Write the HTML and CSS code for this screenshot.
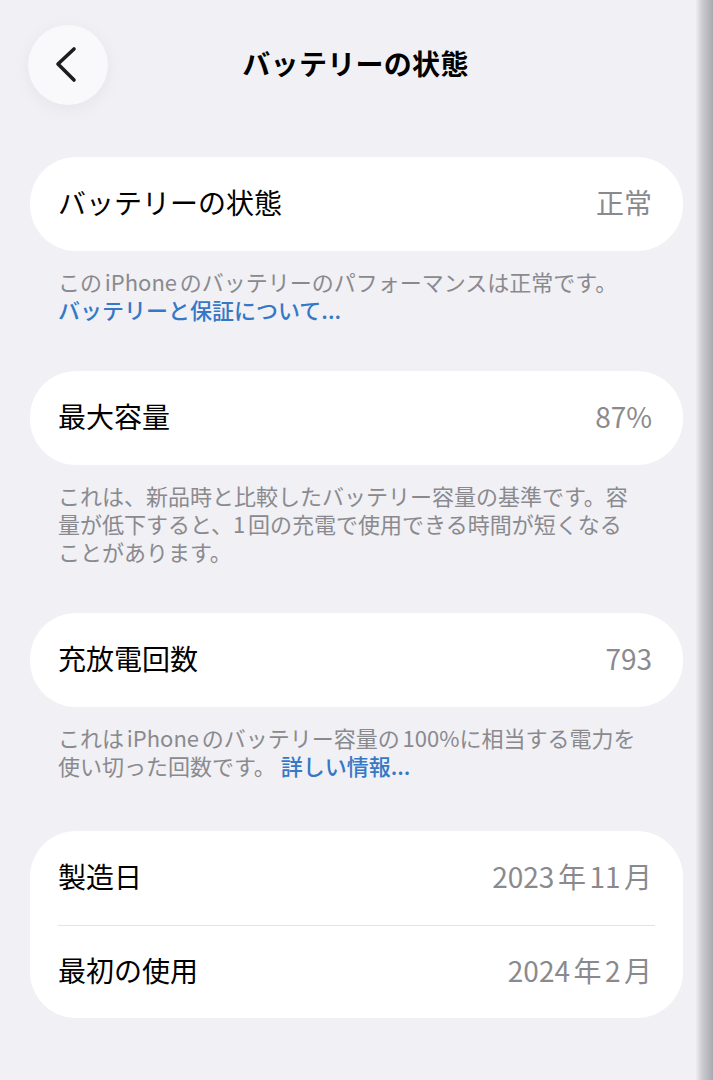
FILE: index.html
```html
<!DOCTYPE html>
<html lang="ja">
<head>
  <meta charset="UTF-8">
  <title>バッテリーの状態</title>
  <meta name="viewport" content="width=device-width, initial-scale=1">
  <link rel="stylesheet" href="styles.css">
</head>
<body>
  <div class="page">
    <header class="nav">
      <button class="back" aria-label="戻る">
        <svg width="24" height="38" viewBox="0 0 24 38">
          <path d="M20 3 L4 18 L20 34" fill="none" stroke="#1c1c1e" stroke-width="3.6" stroke-linecap="round" stroke-linejoin="round"/>
        </svg>
      </button>
      <h1>バッテリーの状態</h1>
      <span></span>
    </header>

    <section class="group">
      <div class="card">
        <div class="row">
          <span class="label">バッテリーの状態</span>
          <span class="value">正常</span>
        </div>
      </div>
      <p class="note">このiPhoneのバッテリーのパフォーマンスは正常です。<br><a href="#">バッテリーと保証について...</a></p>
    </section>

    <section class="group">
      <div class="card">
        <div class="row">
          <span class="label">最大容量</span>
          <span class="value">87%</span>
        </div>
      </div>
      <p class="note">これは、新品時と比較したバッテリー容量の基準です。容量が低下すると、1回の充電で使用できる時間が短くなることがあります。</p>
    </section>

    <section class="group">
      <div class="card">
        <div class="row">
          <span class="label">充放電回数</span>
          <span class="value">793</span>
        </div>
      </div>
      <p class="note">これはiPhoneのバッテリー容量の100%に相当する電力を使い切った回数です。 <a href="#">詳しい情報...</a></p>
    </section>

    <section class="group last">
      <div class="card">
        <div class="row">
          <span class="label">製造日</span>
          <span class="value">2023年11月</span>
        </div>
        <div class="row">
          <span class="label">最初の使用</span>
          <span class="value">2024年2月</span>
        </div>
      </div>
    </section>
  </div>

  <div class="edge"></div>
</body>
</html>
```

FILE: styles.css
```css
body {
  margin: 0;
  background-color: #f0f0f5;
  font-family: "Noto Sans CJK JP", sans-serif;
  color: #000;
  min-height: 1080px;
  text-autospace: normal;
}
.page {
  padding: 25px 30px 40px;
}
.nav {
  display: grid;
  grid-template-columns: 80px 1fr 80px;
  align-items: center;
  margin-left: -2px;
}
.back {
  width: 80px;
  height: 80px;
  border-radius: 50%;
  border: none;
  background-color: #f9f9fb;
  box-shadow: 0 4px 18px rgba(0, 0, 0, 0.05);
  display: flex;
  align-items: center;
  justify-content: center;
  padding: 0 4px 0 0;
}
.nav h1 {
  margin: 0 0 4px;
  text-align: center;
  font-size: 28px;
  font-weight: 700;
  letter-spacing: 0.3px;
}
.group {
  margin-top: 52px;
}
.group + .group {
  margin-top: 48px;
}
.group.last {
  margin-top: 52px;
}
.card {
  background-color: #fff;
  border-radius: 46px;
}
.row {
  height: 94px;
  display: flex;
  align-items: center;
  justify-content: space-between;
  padding: 0 31px 5px 28px;
  box-sizing: border-box;
  font-size: 28px;
}
.row + .row {
  height: 93px;
  border-top: 1px solid #e4e4e8;
  margin: 0 28px;
  padding: 0 3px 5px 0;
}
.value {
  color: #8a8a8e;
}
.note {
  margin: 0;
  padding: 16px 42px 0 28px;
  font-size: 22px;
  line-height: 28px;
  color: #8a8a8e;
}
.note a {
  color: #3678c6;
  font-weight: 500;
  text-decoration: none;
}
.edge {
  position: fixed;
  top: 0;
  right: 0;
  bottom: 0;
  width: 17px;
  background: linear-gradient(to right, #ececf1, #c9c9d0 40%, #a9a9b1);
}
```
